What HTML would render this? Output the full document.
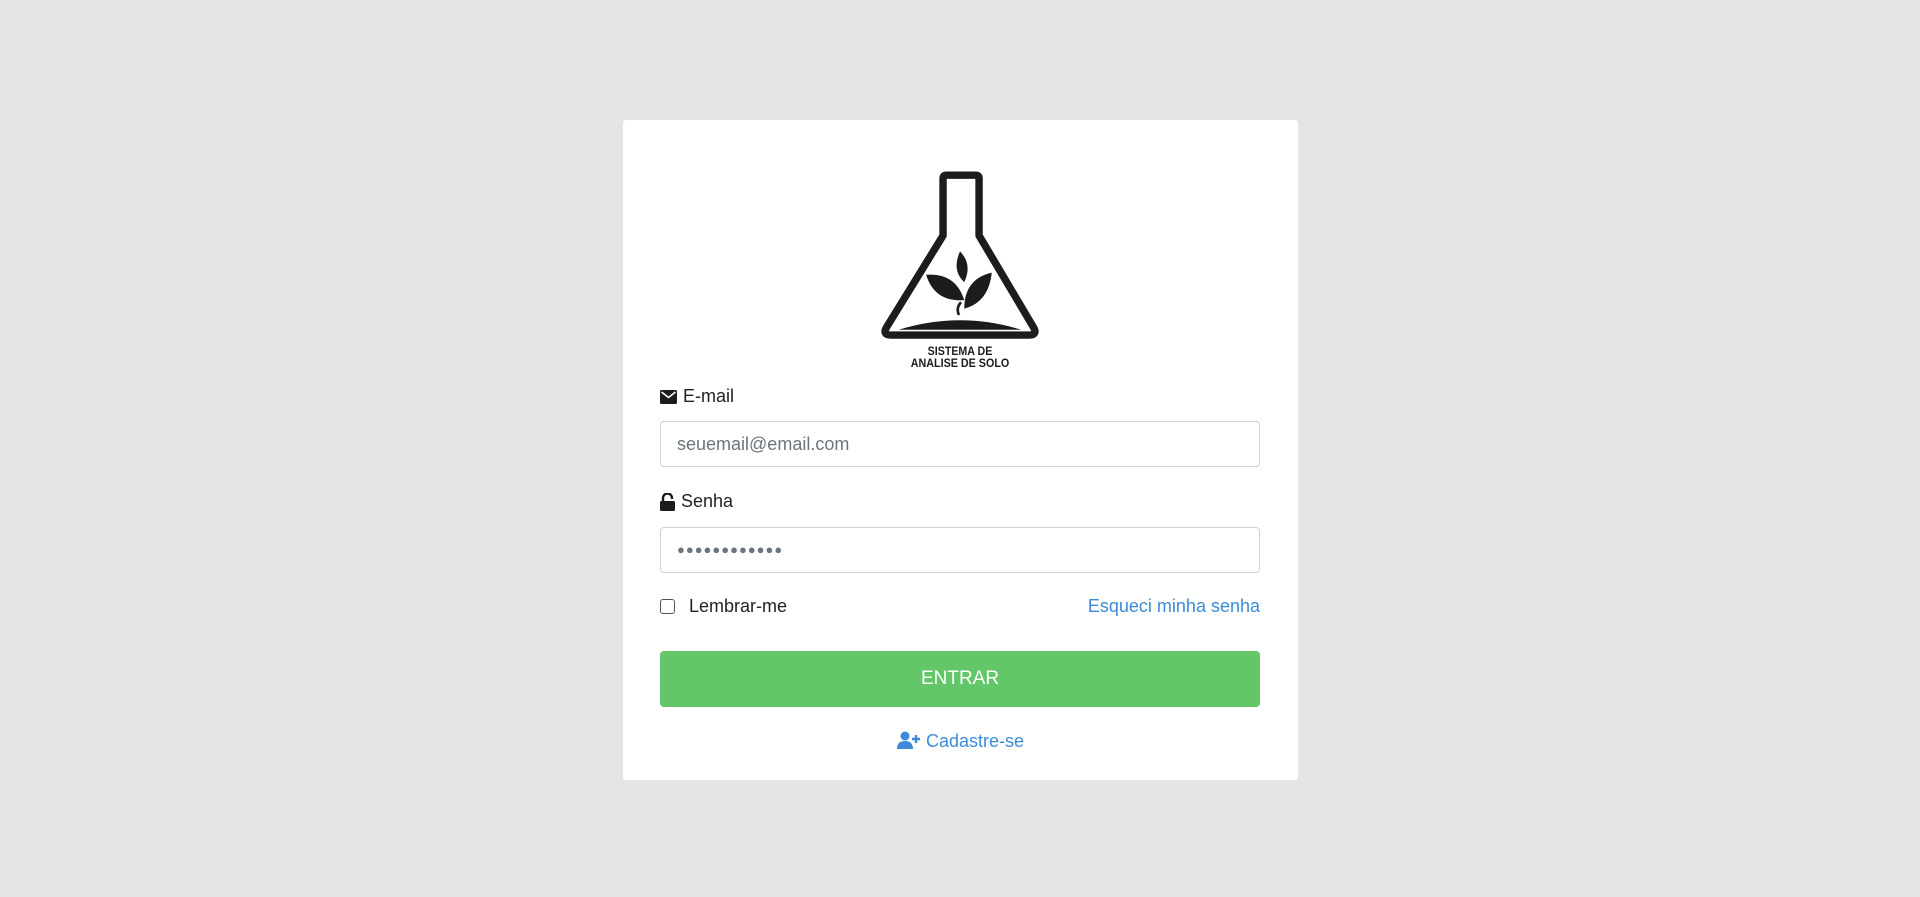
<!DOCTYPE html>
<html><head><meta charset="utf-8"><style>
html,body{margin:0;padding:0}
body{width:1920px;height:897px;background:#e5e5e5;font-family:"Liberation Sans",sans-serif;position:relative;overflow:hidden}
.card{position:absolute;left:623px;top:120px;width:675px;height:660px;background:#fff;border-radius:3px}
.abs{position:absolute}
.lbl{font-size:18px;color:#222;display:flex;align-items:center;gap:6px;left:37px}
.inp{left:37px;border:1px solid #ced4da;border-radius:4px;font-size:18px;color:#6c757d;line-height:44px;padding-left:16px;box-sizing:border-box;width:600px;height:46px}
.btn{left:37px;top:531px;width:600px;height:56px;background:#63c76a;border-radius:4px;color:#fff;font-size:19px;text-align:center;line-height:56px}
a{color:#3d8bd8;text-decoration:none}
</style></head><body>
<div class="card">
<svg class="abs" style="left:231px;top:34px" width="212" height="233" viewBox="0 0 200 220">
<path d="M84,77 L84,23 Q84,20 87,20 L115,20 Q118,20 118,23 L118,77 L169,163 Q174,171 165,171 L35,171 Q26,171 31,163 Z" fill="none" stroke="#1c1c1c" stroke-width="7" stroke-linejoin="round"/>
<path d="M42,166 Q100,148 158,166 Z" fill="#1c1c1c"/>
<path d="M100,92 Q112,104 104,121 Q92,110 100,92 Z" fill="#1c1c1c"/>
<path d="M68,114 Q96,112 104,138 Q76,140 68,114 Z" fill="#1c1c1c"/>
<path d="M130,112 Q127,140 104,146 Q104,118 130,112 Z" fill="#1c1c1c"/>
<path d="M101,140 Q96,145 99,152" fill="none" stroke="#1c1c1c" stroke-width="2.5"/>
<text x="100" y="190" text-anchor="middle" font-family="Liberation Sans Narrow,Liberation Sans,sans-serif" font-weight="bold" font-size="11" fill="#1c1c1c" textLength="61" lengthAdjust="spacingAndGlyphs">SISTEMA DE</text>
<text x="100" y="201" text-anchor="middle" font-family="Liberation Sans Narrow,Liberation Sans,sans-serif" font-weight="bold" font-size="11" fill="#1c1c1c" textLength="93" lengthAdjust="spacingAndGlyphs">ANALISE DE SOLO</text>
</svg>
<div class="abs lbl" style="top:266px"><svg width="17" height="14" viewBox="0 0 17 14"><rect x="0" y="0" width="17" height="14" rx="1.5" fill="#1c1c1c"/><path d="M1.5,2 L8.5,7.5 L15.5,2" fill="none" stroke="#fff" stroke-width="1.6"/></svg>E-mail</div>
<div class="abs inp" style="top:301px">seuemail@email.com</div>
<div class="abs lbl" style="top:371px"><svg width="15" height="18" viewBox="0 0 15 18"><path d="M3,8 L3,5 A4.5,4.5 0 0 1 12,5 L12,6" fill="none" stroke="#1c1c1c" stroke-width="2.4"/><rect x="0" y="8" width="15" height="10" rx="1.5" fill="#1c1c1c"/></svg>Senha</div>
<div class="abs inp" style="top:407px;color:#6c757d;font-size:13px;letter-spacing:1px">●●●●●●●●●●●●</div>
<div class="abs" style="left:37px;top:476px;display:flex;align-items:center;font-size:18px;color:#222"><span style="display:inline-block;width:13px;height:13px;border:1.5px solid #555;border-radius:3px;margin-right:14px"></span>Lembrar-me</div>
<div class="abs" style="right:38px;top:476px;font-size:18px"><a>Esqueci minha senha</a></div>
<div class="abs btn">ENTRAR</div>
<div class="abs" style="left:0;width:675px;top:611px;text-align:center;font-size:18px"><a><svg width="24" height="18" viewBox="0 0 24 18" style="vertical-align:-2px"><circle cx="8" cy="5" r="4.5" fill="#3d8bd8"/><path d="M0,18 Q0,10 8,10 Q16,10 16,18 Z" fill="#3d8bd8"/><path d="M19,4 V12 M15,8 H23" stroke="#3d8bd8" stroke-width="2.4"/></svg> Cadastre-se</a></div>
</div>
</body></html>
